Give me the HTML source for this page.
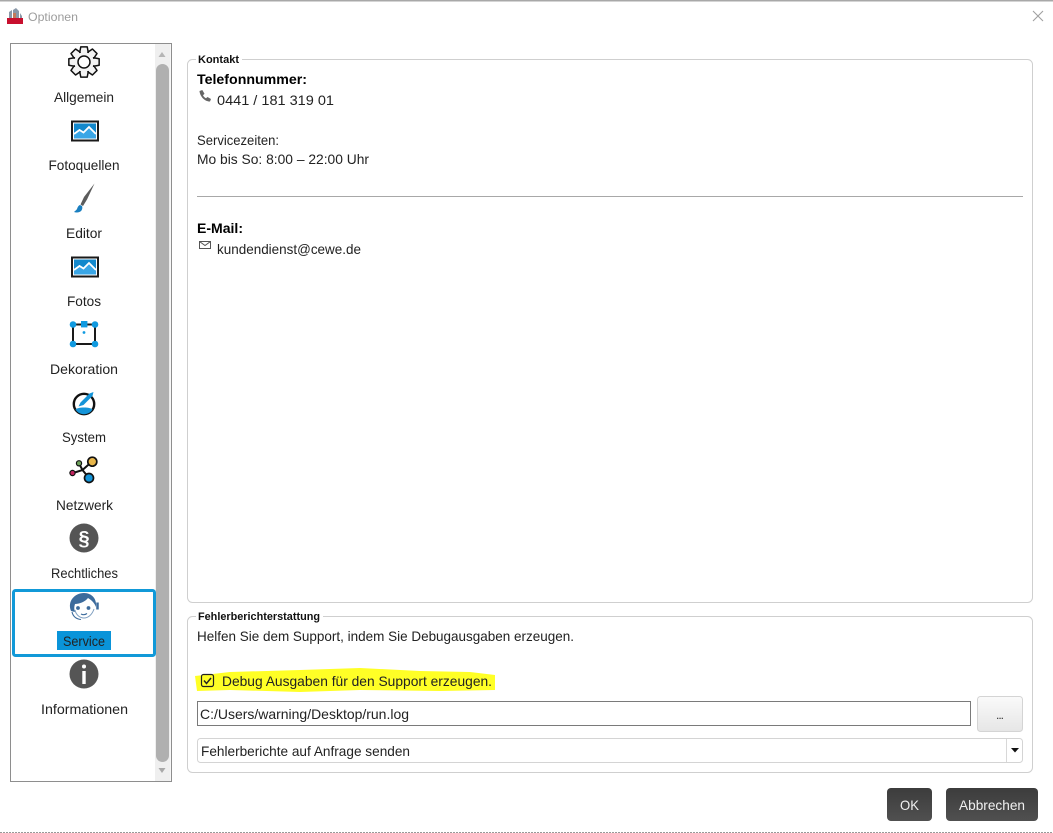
<!DOCTYPE html>
<html lang="de"><head><meta charset="utf-8"><title>Optionen</title>
<style>
html,body{margin:0;padding:0;background:#fff;width:1053px;height:833px;overflow:hidden}
svg{display:block}
text{font-family:"Liberation Sans",sans-serif;font-size:14px;fill:#222}
.c{text-anchor:middle}
.b{font-weight:bold;fill:#000}
</style></head><body>
<svg width="1053" height="833" viewBox="0 0 1053 833" xmlns="http://www.w3.org/2000/svg">
<rect width="1053" height="833" fill="#fff"/>
<rect x="0" y="0" width="1053" height="1.5" fill="#a8a8a8"/>
<line x1="0" y1="832.5" x2="1053" y2="832.5" stroke="#999" stroke-dasharray="2 1"/>

<!-- title bar -->
<rect x="7" y="18" width="16" height="6" fill="#c8102e"/>
<path d="M9 18V12l3-2v8zM13 18V10l3-2 3 3v7zM20 18v-5l2 3v2z" fill="#8a98a8"/>
<path d="M13 18v-5h3v5z" fill="#c47a5a"/>
<text x="28" y="21" textLength="50" lengthAdjust="spacingAndGlyphs" style="font-size:12px;fill:#9c9c9c">Optionen</text>
<path d="M1033 11l10 10M1043 11l-10 10" stroke="#a0a0a0" stroke-width="1.1" fill="none"/>

<!-- list -->
<rect x="10.500" y="43.500" width="161" height="738" fill="#fff" stroke="#8e8e8e"/>
<rect x="155" y="44" width="15.500" height="737" fill="#efefef"/>
<rect x="156" y="64" width="13" height="698" rx="6.500" fill="#b0b0b0"/>
<path d="M158.500 57h7l-3.500-5z" fill="#b5b5b5"/>
<path d="M158.500 768h7l-3.500 5z" fill="#a8a8a8"/>
<rect x="13.500" y="590.500" width="141" height="65" rx="2" fill="#fff" stroke="#1199d8" stroke-width="3"/>
<rect x="57" y="631" width="54" height="19" fill="#0a94d9"/>

<!-- gear -->
<g transform="translate(84 62)" fill="#f4f4f4" stroke="#111" stroke-width="1.500" stroke-linejoin="round">
<polygon points="9.59,-4.27 15.16,-3.22 15.16,3.22 9.59,4.27 9.80,3.76 13,8.44 8.44,13 3.76,9.80 4.27,9.59 3.22,15.16 -3.22,15.16 -4.27,9.59 -3.76,9.80 -8.44,13 -13,8.44 -9.80,3.76 -9.59,4.27 -15.16,3.22 -15.16,-3.22 -9.59,-4.27 -9.80,-3.76 -13,-8.44 -8.44,-13 -3.76,-9.80 -4.27,-9.59 -3.22,-15.16 3.22,-15.16 4.27,-9.59 3.76,-9.80 8.44,-13 13,-8.44 9.80,-3.76"/>
<circle r="6" fill="#fff"/>
</g>
<!-- photos -->
<g>
<rect x="72" y="121.500" width="26" height="19" fill="#fff" stroke="#1a1a1a" stroke-width="2"/>
<rect x="74" y="123.500" width="22" height="15" fill="#1288cc"/>
<path d="M74 134.500l5.500-4 4 2.500 5.500-5.500 7 7V138.500H74z" fill="#3aa6e6"/>
<path d="M74 134l5.500-4 4 2.500 5.500-5.500 7 7" fill="none" stroke="#fff" stroke-width="1.800"/>
</g>
<g transform="translate(0 136)">
<rect x="72" y="121.500" width="26" height="19" fill="#fff" stroke="#1a1a1a" stroke-width="2"/>
<rect x="74" y="123.500" width="22" height="15" fill="#1288cc"/>
<path d="M74 134.500l5.500-4 4 2.500 5.500-5.500 7 7V138.500H74z" fill="#3aa6e6"/>
<path d="M74 134l5.500-4 4 2.500 5.500-5.500 7 7" fill="none" stroke="#fff" stroke-width="1.800"/>
</g>
<!-- brush -->
<path d="M94.500 183.500L84 197l-3.500 7.500 2.500 1.500 4-6.500z" fill="#5c5c5c"/>
<path d="M80 205c-2 .5-2.500 3-3 4s-2 2-3 3c2.500 1 6 .5 7.500-1.500 1-1.500 1-3.500.5-4.500z" fill="#1a7fc0"/>
<!-- dekoration -->
<rect x="73" y="324.500" width="22" height="19.500" fill="#fff" stroke="#1a1a1a" stroke-width="2"/>
<g fill="#109ae0"><circle cx="73" cy="324.500" r="3.300"/><circle cx="95" cy="324.500" r="3.300"/><circle cx="73" cy="344" r="3.300"/><circle cx="95" cy="344" r="3.300"/><rect x="81" y="321" width="6.400" height="6.400"/><circle cx="84" cy="332.500" r="1.400"/></g>
<!-- system -->
<circle cx="84" cy="404" r="10.200" fill="#fff" stroke="#111" stroke-width="2.400"/>
<path d="M75.500 409.500a10 10 0 0 0 17 0c-2-1.500-4-2-8.500-2s-6.500.5-8.500 2z" fill="#1494d8"/>
<path d="M78.500 406.500l2-4 9-9 4-1.500-1 4-9 9z" fill="#1494d8"/>
<!-- netzwerk -->
<g stroke="#111" stroke-width="2" fill="none"><path d="M73 473l9.500-3 6.500 8M82.500 470l9.500-8.500M82.500 470l-3.500-6.500"/></g>
<circle cx="92.300" cy="461.700" r="4.500" fill="#e8b64a" stroke="#111" stroke-width="1.700"/>
<circle cx="89" cy="478" r="4.500" fill="#1494d8" stroke="#111" stroke-width="1.700"/>
<circle cx="79" cy="463.300" r="2.600" fill="#6fa35c" stroke="#111" stroke-width="1.200"/>
<circle cx="72.500" cy="473" r="2.600" fill="#c0245e" stroke="#111" stroke-width="1.200"/>
<!-- § -->
<circle cx="84" cy="538" r="14.500" fill="#555"/>
<text x="84" y="545" class="c" style="font-size:20px;font-weight:bold;fill:#fff">§</text>
<!-- service -->
<path d="M71 611C67 601 75 593 84 593C92 593 97 599 96 607C94 602 91 600 88 598C85 602 79 604 75 604C74 607 74 609 75 612Z" fill="#3c6b9c"/>
<path d="M75 610C76 615 80 618 84 618C88 618 92 615 94 609" fill="none" stroke="#7f9fc0" stroke-width="1"/>
<circle cx="78" cy="608" r="1.900" fill="#3c6b9c"/>
<circle cx="88.500" cy="608" r="1.900" fill="#3c6b9c"/>
<path d="M81 614c2 1 4 1 6 -.5" stroke="#3c6b9c" stroke-width="1.200" fill="none"/>
<path d="M97.500 602.500v7" stroke="#3c6b9c" stroke-width="2.500" fill="none"/>
<path d="M72 612c1 4 4 7 9 7.500" stroke="#3c6b9c" stroke-width="1.100" fill="none"/>
<!-- info -->
<circle cx="84" cy="674" r="14.500" fill="#555"/>
<circle cx="84" cy="666.500" r="2" fill="#fff"/>
<rect x="82.300" y="671" width="3.400" height="13" fill="#fff"/>

<text class="c" x="84" y="102" textLength="60" lengthAdjust="spacingAndGlyphs">Allgemein</text>
<text class="c" x="84" y="170" textLength="71" lengthAdjust="spacingAndGlyphs">Fotoquellen</text>
<text class="c" x="84" y="238" textLength="36" lengthAdjust="spacingAndGlyphs">Editor</text>
<text class="c" x="84" y="306" textLength="34" lengthAdjust="spacingAndGlyphs">Fotos</text>
<text class="c" x="84" y="374" textLength="68" lengthAdjust="spacingAndGlyphs">Dekoration</text>
<text class="c" x="84" y="442" textLength="44" lengthAdjust="spacingAndGlyphs">System</text>
<text class="c" x="84.500" y="510" textLength="57" lengthAdjust="spacingAndGlyphs">Netzwerk</text>
<text class="c" x="84.500" y="578" textLength="67" lengthAdjust="spacingAndGlyphs">Rechtliches</text>
<text class="c" x="84" y="646" textLength="42" lengthAdjust="spacingAndGlyphs">Service</text>
<text class="c" x="84.500" y="714" textLength="87" lengthAdjust="spacingAndGlyphs">Informationen</text>

<!-- Kontakt group -->
<rect x="187.500" y="59.500" width="845" height="543" rx="5" fill="#fff" stroke="#cfcfcf"/>
<rect x="196" y="54" width="46" height="11" fill="#fff"/>
<text x="198" y="63" textLength="41" lengthAdjust="spacingAndGlyphs" style="font-size:11px;font-weight:bold;fill:#111">Kontakt</text>
<text x="197" y="84" class="b" textLength="110" lengthAdjust="spacingAndGlyphs">Telefonnummer:</text>
<path d="M199.500 91l2.800-1 2.200 3.700-1.500 1.500c.6 1.300 1.700 2.500 3 3l1.500-1.200 3.500 2-1 2.500c-4.500 .3-10-4.500-10.500-10.500z" fill="#666"/>
<text x="217" y="105" textLength="117" lengthAdjust="spacingAndGlyphs">0441 / 181 319 01</text>
<text x="197" y="145" textLength="82" lengthAdjust="spacingAndGlyphs">Servicezeiten:</text>
<text x="197" y="164" textLength="172" lengthAdjust="spacingAndGlyphs">Mo bis So: 8:00 – 22:00 Uhr</text>
<line x1="197" y1="196.500" x2="1023" y2="196.500" stroke="#a8a8a8"/>
<text x="197" y="233" class="b" textLength="46" lengthAdjust="spacingAndGlyphs">E-Mail:</text>
<rect x="199.500" y="241.500" width="11" height="7" fill="none" stroke="#555"/>
<path d="M199.500 241.500l5.500 4 5.500-4" fill="none" stroke="#555"/>
<text x="217" y="254" textLength="144" lengthAdjust="spacingAndGlyphs">kundendienst@cewe.de</text>

<!-- Fehler group -->
<rect x="187.500" y="616.500" width="845" height="156" rx="5" fill="#fff" stroke="#cfcfcf"/>
<rect x="196" y="611" width="127" height="11" fill="#fff"/>
<text x="198" y="620" textLength="122" lengthAdjust="spacingAndGlyphs" style="font-size:11px;font-weight:bold;fill:#111">Fehlerberichterstattung</text>
<text x="197" y="641" textLength="377" lengthAdjust="spacingAndGlyphs">Helfen Sie dem Support, indem Sie Debugausgaben erzeugen.</text>
<path d="M195 676L230 672 300 670 360 668 420 671 470 672 495 675 495 690 440 691 360 690 300 692 230 690 197 691Z" fill="#ffff26"/>
<rect x="201.500" y="674.500" width="12" height="12" rx="2" fill="none" stroke="#222" stroke-width="1.200"/>
<path d="M204 680.500l2.500 3 4.500-5.500" fill="none" stroke="#222" stroke-width="1.500"/>
<text x="222" y="686" textLength="270" lengthAdjust="spacingAndGlyphs">Debug Ausgaben für den Support erzeugen.</text>
<rect x="197.500" y="701.500" width="773" height="24" fill="#fff" stroke="#7a7a7a"/>
<text x="200" y="719" textLength="209" lengthAdjust="spacingAndGlyphs">C:/Users/warning/Desktop/run.log</text>
<defs><linearGradient id="g" x1="0" y1="0" x2="0" y2="1"><stop offset="0" stop-color="#fafafa"/><stop offset="1" stop-color="#e6e6e6"/></linearGradient>
<linearGradient id="d" x1="0" y1="0" x2="0" y2="1"><stop offset="0" stop-color="#3c3c3c"/><stop offset="1" stop-color="#505050"/></linearGradient></defs>
<rect x="977.500" y="696.500" width="45" height="35" rx="3" fill="url(#g)" stroke="#d4d4d4"/>
<text x="1000" y="719" class="c" textLength="8" lengthAdjust="spacing" style="font-size:12px;fill:#333">...</text>
<rect x="197.500" y="738.500" width="825" height="24" rx="3" fill="#fff" stroke="#d4d4d4"/>
<line x1="1006.500" y1="739" x2="1006.500" y2="762" stroke="#d8d8d8"/>
<path d="M1011 748h8l-4 4.500z" fill="#111"/>
<text x="201" y="756" textLength="209" lengthAdjust="spacingAndGlyphs">Fehlerberichte auf Anfrage senden</text>

<!-- buttons -->
<rect x="887" y="788" width="45" height="33" rx="4" fill="url(#d)"/>
<rect x="946" y="788" width="92" height="33" rx="4" fill="url(#d)"/>
<text x="900" y="810" textLength="19" lengthAdjust="spacingAndGlyphs" style="fill:#f0f0f0">OK</text>
<text x="959" y="810" textLength="66" lengthAdjust="spacingAndGlyphs" style="fill:#f0f0f0">Abbrechen</text>
</svg>
</body></html>
